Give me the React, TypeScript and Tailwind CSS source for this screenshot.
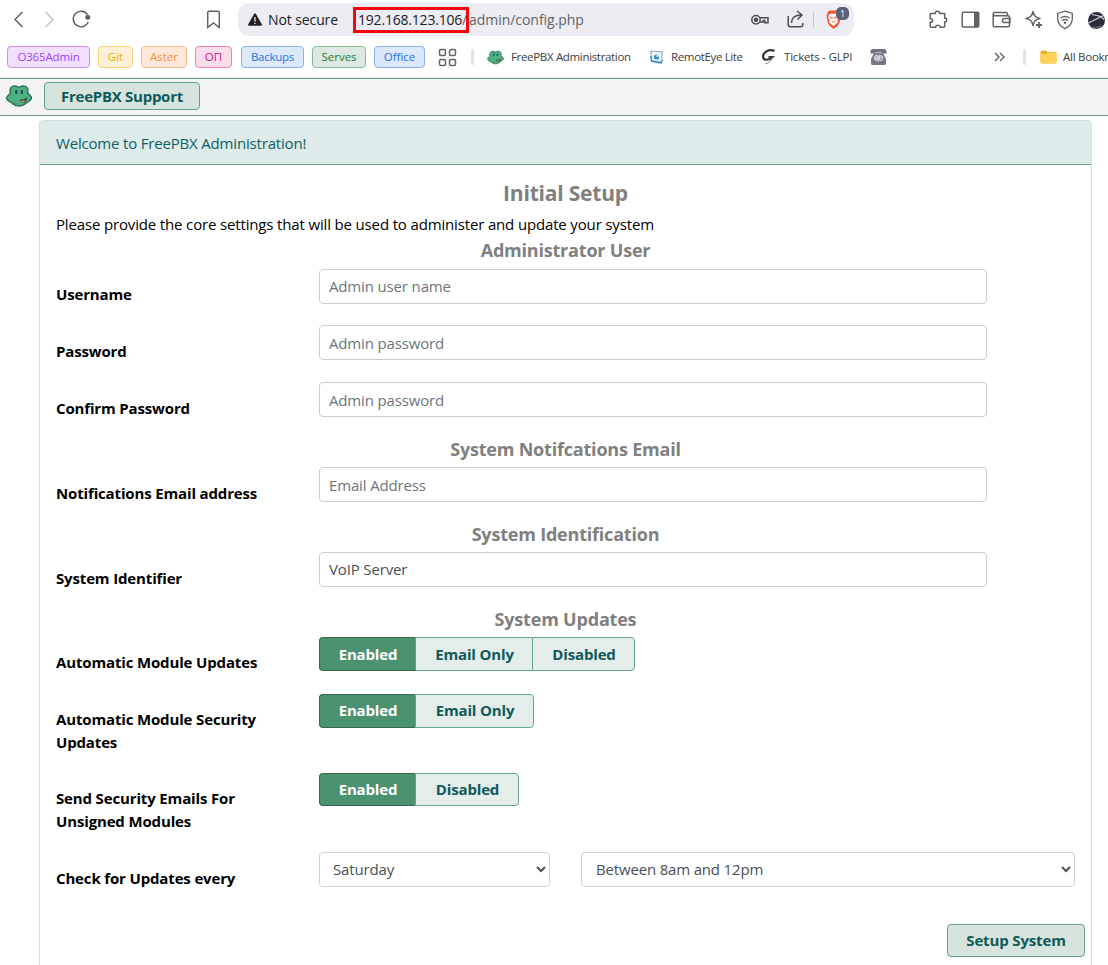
import type { ReactNode } from "react";

function Frog({ className }: { className: string }) {
  return (
    <svg viewBox="0 0 27 22" className={className}>
      <path d="M4.800 8.500C3.600 4 5.500 1 8.800.900c2 0 3.200.700 4.700 1.500C15 1.600 16.200.900 18.200.900c3.300.100 5.200 3.100 4 7.100 1.500 1.500 3.800 3.500 3.900 5 0 2.500-3.600 3.500-5.600 5.300-2 1.900-4.200 2.800-7 2.800S8.500 20 6.500 18.200C4.500 16.500.900 15.500.900 13c.100-1.500 2.400-3 3.900-4.500Z" fill="#4db183" stroke="#27685b" strokeWidth="1.300" />
      <path d="M2.500 14c2 3 6 4.500 10 4.800" fill="none" stroke="#3b9670" strokeWidth="1.200" />
      <ellipse cx="10.700" cy="7" rx="1.100" ry="2.200" fill="#1b4a57" />
      <ellipse cx="16.300" cy="7" rx="1.100" ry="2.200" fill="#1b4a57" />
      <path d="M14 14.500c3 .800 5.500-.500 7.500-2.500.300 3-1.500 6-4 6-1.500 0-2.800-1-3.500-3.500Z" fill="#235054" />
      <path d="M15 16.300c1.800-.900 3.500-1 5-.700-1.200 2-3.500 2.700-5 .700Z" fill="#f59542" />
    </svg>
  );
}

function NavIcons() {
  return (
    <svg width="238" height="39" viewBox="0 0 238 39" fill="none" stroke="#5f6368" strokeWidth="1.500" className="shrink-0">
      <path d="m22.500 12-7.500 7.500 7.500 7.500" />
      <path d="m45.500 12 7.500 7.500-7.500 7.500" stroke="#c4c4c8" />
      <path d="M87.500 14.500A7.800 7.800 0 1 0 88.300 22" />
      <circle cx="87.700" cy="17.300" r="2.500" fill="#5f6368" stroke="none" />
      <path d="M207.700 12.500q0-1.200 1.200-1.200h9.200q1.200 0 1.200 1.200v15l-5.800-4.500-5.800 4.500Z" />
    </svg>
  );
}

function AddressIcons() {
  return (
    <svg width="110" height="33" viewBox="744 3 110 33" fill="none" stroke="#4b4d55" strokeWidth="1.500" className="shrink-0">
      <circle cx="756" cy="19.800" r="4.200" />
      <circle cx="756" cy="19.800" r="1.500" fill="#4b4d55" />
      <path d="M760 17.800h8v5h-3.200v-2.300h-1.600v1.500h-3.400" />
      <path d="M788.200 16v8.500q0 2.300 2.300 2.300h10q2.300 0 2.300-2.300V23M791.500 23c0-5 3-8 10-8M797 11l5 4-4.500 4.500" />
      <path d="M813.500 11.500v16" stroke="#c4c4cc" strokeWidth="1" />
      <path d="m827 12.500 3-2h7l3 2 1 3-1.500 7.500-2 3-3.800 3-3.800-3-2-3-1.400-7.500 1.500-3Z" fill="#fb542b" stroke="none" />
      <path d="m829 14.500 2.500-1 2 .500 2-.500 2.500 1 1 3-1.500 2.500.300 2.500-4.300 3.500-4.300-3.500.300-2.500-1.500-2.500Z" fill="#fff" stroke="none" />
      <path d="m830 17 2.500.700-.700 1.500M837 17l-2.500.700.700 1.500m-3.200 3 1.500-.700 1.500.700" stroke="#fb542b" strokeWidth=".9" />
      <rect x="836" y="7" width="13" height="13" rx="5" fill="#5c6077" stroke="none" />
      <text x="842.500" y="16.700" textAnchor="middle" fontSize="9" fill="#fff" stroke="none" fontFamily="Open Sans, sans-serif">1</text>
    </svg>
  );
}

function ToolIcons() {
  return (
    <svg width="188" height="39" viewBox="920 0 188 39" fill="none" stroke="#5f6368" strokeWidth="1.500" className="shrink-0">
      <path d="M931 13.500h4.200c-.500-3 5-3 4.500 0h4.300q.700 0 .700.700v4c2.600-.700 2.600 4.300 0 3.800v4.500q0 .700-.700.700h-3.800c.400-2.600-5-2.600-4.500 0H931q-.800 0-.800-.700v-4.200c3.200.500 3.200-4.300 0-3.800v-4.300q0-.700.800-.700Z" />
      <rect x="962.200" y="12.200" width="16.500" height="14.800" rx="1" />
      <path d="M974 12h4.700v15H974Z" fill="#5f6368" stroke="none" />
      <path d="M1007.500 15.500v-1.200q0-1.800-1.800-1.800h-11q-1.500 0-1.500 1.500t1.500 1.700h13.300q1.500 0 1.500 1.500v8q0 1.500-1.500 1.500h-13.300q-1.500 0-1.500-1.500V14M1010 18.500h-6q-1.500 0-1.500 1.500v1q0 1.500 1.500 1.500h6Z" />
      <path d="M1033 11.500c1 4.500 2.500 6 7 7-4.500 1-6 2.500-7 7-1-4.500-2.500-6-7-7 4.500-1 6-2.500 7-7Z" strokeLinejoin="round" />
      <path d="M1039 22v6M1036 25h6" strokeWidth="1.800" />
      <path d="m1065 11.200 7.300 2.200v5c0 5.500-3 8.200-7.300 10.200-4.300-2-7.300-4.700-7.300-10.200v-5Z" strokeWidth="1.300" />
      <path d="M1060.500 18q4.500-3 9 0M1062 20.500q3-2 6 0" strokeWidth="1.300" />
      <circle cx="1065" cy="22.800" r="1.200" fill="#5f6368" stroke="none" />
      <circle cx="1096.500" cy="20.500" r="8.500" fill="#292d36" stroke="none" />
      <path d="m1088.500 23 16-8M1092 14.500l9 2 3 3" stroke="#d2dae1" strokeWidth="1.200" />
      <path d="M1091 27q5 2 11-1" stroke="#606978" />
    </svg>
  );
}

function Pill({ className, children }: { className: string; children: ReactNode }) {
  return <span className={`flex h-[22px] shrink-0 items-center justify-center rounded-[4px] border-[1.5px] text-[11.5px] font-medium whitespace-nowrap ${className}`}>{children}</span>;
}

function Browser() {
  return (
    <div className="h-[78px] overflow-hidden border-b border-[#e4e4e7] bg-white">
      <div className="flex h-[39px] w-[1108px] items-center">
        <NavIcons />
        <div className="flex h-[33px] w-[616px] shrink-0 items-center rounded-[11px] bg-[#eeecf3]">
          <svg viewBox="0 0 14 13" className="ml-[10px] h-[13px] w-[14px] shrink-0">
            <path d="M6.200.800q.800-1.200 1.600 0l6 10.500q.500 1.400-.800 1.400H1q-1.300 0-.800-1.400Z" fill="#202124" />
            <path d="M7 4v4.500M7 9.700v1.300" stroke="#eeecf3" strokeWidth="1.300" />
          </svg>
          <span className="ml-[6px] w-[85px] text-[14px] tracking-[-0.1px] whitespace-nowrap text-[#202124]">Not secure</span>
          <span className="flex h-[26px] w-[116px] shrink-0 items-center border-[3px] border-[#f80509] pl-[2px] text-[14px] tracking-[-0.2px] whitespace-nowrap text-[#202124]">
            192.168.123.106<span className="text-[#5f6368]">/</span>
          </span>
          <span className="grow text-[14px] tracking-[-0.04px] text-[#5f6368]">admin/config.php</span>
          <AddressIcons />
        </div>
        <div className="w-[66px] shrink-0" />
        <ToolIcons />
      </div>
      <div className="flex h-[36px] w-[1180px] items-center pl-[7px] text-[11.5px] text-[#3c4043]">
        <Pill className="w-[83px] border-[#cb91f8] bg-[#f0dfff] tracking-[-0.15px] text-[#a142f4]">O365Admin</Pill>
        <Pill className="ml-[8px] w-[35px] border-[#fdcf79] bg-[#fff1d8] text-[#f9ab00]">Git</Pill>
        <Pill className="ml-[8px] w-[46px] border-[#fdbd91] bg-[#ffe8d9] text-[#fa903e]">Aster</Pill>
        <Pill className="ml-[8px] w-[37px] border-[#ed80b7] bg-[#fadcea] text-[#d01884]">ОП</Pill>
        <Pill className="ml-[9px] w-[63px] border-[#88b0f2] bg-[#dce8fc] tracking-[-0.25px] text-[#1a73e8]">Backups</Pill>
        <Pill className="ml-[8px] w-[54px] border-[#88bd94] bg-[#deeae1] text-[#188038]">Serves</Pill>
        <Pill className="ml-[8px] w-[51px] border-[#88b0f2] bg-[#dce8fc] text-[#1a73e8]">Office</Pill>
        <svg width="19" height="19" fill="none" stroke="#5f6368" strokeWidth="1.500" className="ml-[13px] shrink-0">
          <rect x="1.500" y="1.500" width="6" height="6" rx="1.500" /><rect x="11.500" y="1.500" width="6" height="6" rx="1.500" />
          <rect x="1.500" y="11.500" width="6" height="6" rx="1.500" /><rect x="11.500" y="11.500" width="6" height="6" rx="1.500" />
        </svg>
        <span className="ml-[14px] h-[16px] w-[3px] rounded bg-[#e4e2e9]" />
        <Frog className="ml-[13px] h-[15px] w-[17px] shrink-0" />
        <span className="ml-[7px] w-[139px] shrink-0 tracking-[-0.33px] whitespace-nowrap">FreePBX Administration</span>
        <svg width="14" height="14" className="shrink-0">
          <path d="m.800 1 11.700 1q-1 6 0 11L1.500 11Z" fill="#f4f7fa" />
          <path d="M1 7V1l11.500 1q-1 3-.600 8" fill="none" stroke="#9aa5b0" strokeWidth="1.100" />
          <path d="m1 6 .500 5 9.500 1.800 1.500-2.800" fill="none" stroke="#2b83c6" strokeWidth="1.500" />
          <circle cx="6.500" cy="7" r="2.600" fill="#2f8ccc" /><circle cx="7.400" cy="6" r="1.100" fill="#fff" />
        </svg>
        <span className="ml-[7px] w-[90px] shrink-0 tracking-[-0.35px] whitespace-nowrap">RemotEye Lite</span>
        <svg width="16" height="16" className="shrink-0" fill="none" stroke="#33383d">
          <path d="M13.500 2C8-.500 2 3.500 2 7.500c0 4 6 4.500 9.500.500L7.500 8" strokeWidth="2.200" />
          <path d="M12 8.500Q9 14 4 15" stroke="#9d9d9d" strokeWidth="1.200" />
        </svg>
        <span className="ml-[7px] w-[86px] shrink-0 tracking-[-0.2px] whitespace-nowrap">Tickets - GLPI</span>
        <svg width="17" height="18" className="shrink-0">
          <path d="M.500 5.500V3.500q0-2.500 2.500-2.500h11q2.500 0 2.500 2.500v2h-3.500L12 4.500H5l-1 1Z" fill="#70737f" />
          <path d="M4 5h9l3 6v4.500q0 1.500-1.500 1.500h-12Q1 17 1 15.500V11Z" fill="#747884" />
          <ellipse cx="8.500" cy="10" rx="4.800" ry="3.500" fill="#d4d6dc" />
          <circle cx="8.500" cy="10" r="2.600" fill="none" stroke="#747884" strokeWidth="1" strokeDasharray="1.200 1" />
          <circle cx="11" cy="11" r=".8" fill="#d64949" />
        </svg>
        <svg width="12" height="10" fill="none" stroke="#5f6368" strokeWidth="1.400" className="ml-[107px] shrink-0"><path d="m1 1 4 4-4 4M6 1l4 4-4 4" /></svg>
        <span className="ml-[17px] h-[16px] w-[3px] shrink-0 rounded bg-[#e4e2e9]" />
        <svg width="17" height="14" className="ml-[14px] shrink-0">
          <path d="M.500 2q0-1.500 1.500-1.500h4L7.500 2H15q1.500 0 1.500 1.500V12q0 1.500-1.500 1.500H2Q.500 13.500.500 12Z" fill="#eeb125" />
          <path d="M.500 4h6L8 2.700h8.500V12q0 1.200-1.500 1.200H2Q.500 13.200.500 12Z" fill="#ffd25d" />
        </svg>
        <span className="ml-[6px] tracking-[-0.25px] whitespace-nowrap">All Bookmarks</span>
      </div>
    </div>
  );
}

function Heading({ children }: { children: ReactNode }) {
  return <h2 className="h-[28.2px] text-center text-[18px] leading-[20px] font-bold tracking-[-0.2px] text-[#808080]">{children}</h2>;
}

function Row({ label, tall, children }: { label: string; tall?: boolean; children: ReactNode }) {
  return (
    <div className={`flex ${tall ? "h-[79.2px]" : "h-[56.75px]"}`}>
      <label className="w-[263px] shrink-0 pt-[14.6px] pr-[40px] text-[15px] leading-[22.5px] font-bold tracking-[-0.15px] text-black">{label}</label>
      {children}
    </div>
  );
}

function Field({ placeholder, value }: { placeholder?: string; value?: string }) {
  return <input placeholder={placeholder} defaultValue={value} className="h-[35px] w-[668px] rounded-[4px] border border-[#cccccc] px-[9px] text-[15px] tracking-[-0.15px] text-[#495057] placeholder:text-[#6c757d]" />;
}

function Choices({ items, short }: { items: [string, string][]; short?: boolean }) {
  return (
    <div className={`flex ${short ? "h-[33px]" : "h-[34px]"}`}>
      {items.map(([item, width], i) => (
        <button key={item} className={`${width} border-y pl-px text-[15px] font-bold tracking-[-0.15px] ${i === 0 ? "rounded-l-[4px] border-l border-[#36674f] bg-[#4b9370] text-white" : "border-l border-[#66a488] bg-[#e4edea] text-[#0e5a5a]"} ${i === items.length - 1 ? "rounded-r-[4px] border-r" : ""}`}>
          {item}
        </button>
      ))}
    </div>
  );
}

export default function App() {
  return (
    <div className="h-[965px] w-full overflow-hidden bg-white font-['Open_Sans',sans-serif] text-[15px]">
      <Browser />
      <header className="flex h-[38px] items-start border-y border-[#66a488] bg-[#f4f4f4] pt-[3px] pl-[5px]">
        <Frog className="mt-[3px] h-[22px] w-[28px]" />
        <button className="ml-[11px] h-[28px] w-[156px] rounded-[4px] border border-[#66a488] bg-[#d7e4dd] text-[15px] font-bold tracking-[-0.27px] text-[#0e5a5a]">FreePBX Support</button>
      </header>
      <main className="mt-[4px] ml-[39px] h-[860px] w-[1053px] rounded-t-[4px] border border-[#d8dadc]">
        <div className="h-[44px] rounded-t-[3px] border-b border-[#66a488] bg-[#ddebeb] pl-[16px] leading-[45px] tracking-[-0.18px] text-[#0e6060]">Welcome to FreePBX Administration!</div>
        <div className="px-[16px]">
          <h1 className="h-[48px] pt-[13px] text-center text-[21px] leading-[30px] font-bold tracking-[-0.2px] text-[#808080]">Initial Setup</h1>
          <p className="h-[27.4px] leading-[22px] tracking-[-0.153px] text-black">Please provide the core settings that will be used to administer and update your system</p>
          <Heading>Administrator User</Heading>
          <Row label="Username"><Field placeholder="Admin user name" /></Row>
          <Row label="Password"><Field placeholder="Admin password" /></Row>
          <Row label="Confirm Password"><Field placeholder="Admin password" /></Row>
          <Heading>System Notifcations Email</Heading>
          <Row label="Notifications Email address"><Field placeholder="Email Address" /></Row>
          <Heading>System Identification</Heading>
          <Row label="System Identifier"><Field value="VoIP Server" /></Row>
          <Heading>System Updates</Heading>
          <Row label="Automatic Module Updates"><Choices items={[["Enabled", "w-[96px]"], ["Email Only", "w-[117px]"], ["Disabled", "w-[103px]"]]} /></Row>
          <Row label="Automatic Module Security Updates" tall><Choices items={[["Enabled", "w-[96px]"], ["Email Only", "w-[119px]"]]} /></Row>
          <Row label="Send Security Emails For Unsigned Modules" tall><Choices short items={[["Enabled", "w-[96px]"], ["Disabled", "w-[104px]"]]} /></Row>
          <Row label="Check for Updates every">
            <select className="h-[35px] w-[231px] rounded-[4px] border border-[#ced4da] bg-white pr-[10px] pb-px pl-[9px] tracking-[-0.15px] text-[#495057]"><option>Saturday</option></select>
            <select className="ml-[31px] h-[35px] w-[494px] shrink-0 rounded-[4px] border border-[#ced4da] bg-white pr-[11px] pb-px pl-[10px] tracking-[-0.17px] text-[#495057]"><option>Between 8am and 12pm</option></select>
          </Row>
        </div>
        <div className="flex justify-end pt-[15px] pr-[6px]">
          <button className="h-[33px] w-[138px] rounded-[4px] border border-[#66a488] bg-[#d7e4dd] text-[15px] font-bold tracking-[-0.15px] text-[#0e5a5a]">Setup System</button>
        </div>
      </main>
    </div>
  );
}
